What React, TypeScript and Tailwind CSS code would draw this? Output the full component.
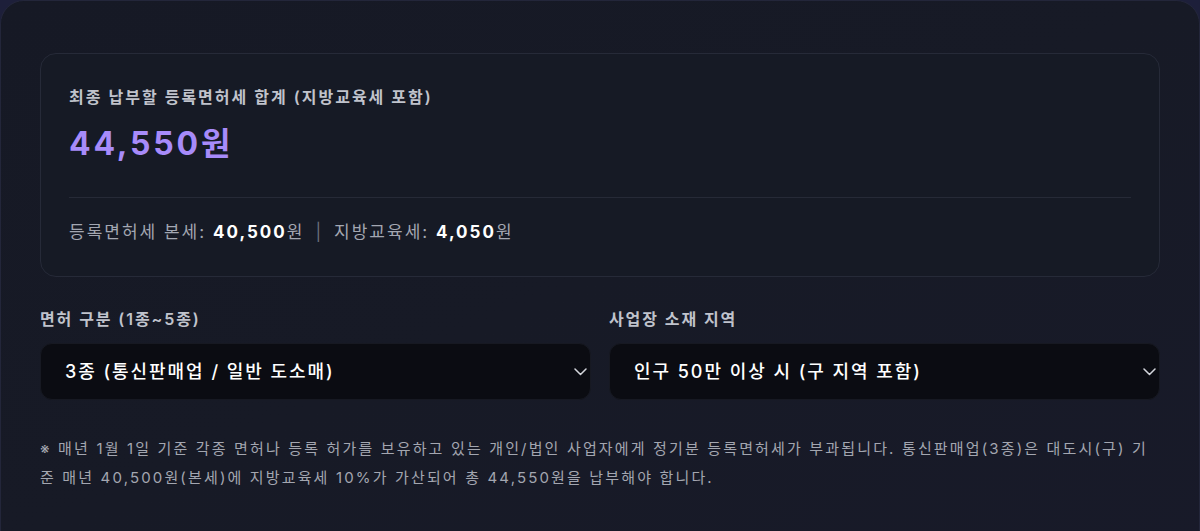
const font = { fontFamily: '"Inter", "Noto Sans CJK KR", sans-serif' };

type SelectProps = { label: string; value: string };

const Chevron = () => (
  <svg width="13" height="8" viewBox="0 0 13 8" fill="none" className="text-[#d4d6dc]">
    <path d="M1 1l5.5 5.5L12 1" stroke="currentColor" strokeWidth="1.5" strokeLinecap="round" strokeLinejoin="round" />
  </svg>
);

const SelectField = ({ label, value }: SelectProps) => {
  return (
    <div className="flex flex-col">
      <span className="text-[16px] leading-6 font-semibold tracking-[1.9px] text-[#c0c3cc] mb-[12px]">{label}</span>
      <div className="flex items-center justify-between h-[57px] rounded-xl bg-[#0b0c12] border border-[#171922] pl-6 pr-[3px]">
        <span className="text-[18px] font-medium tracking-[1.95px] text-white">{value}</span>
        <Chevron />
      </div>
    </div>
  );
};

const App = () => {
  return (
    <div className="w-[1200px] h-[531px] overflow-hidden bg-[#1d1f3a]" style={font}>
      <div className="h-[560px] rounded-[24px] border border-[#23263a] bg-gradient-to-br from-[#161925] via-[#171a26] to-[#181a29] px-[39px] pt-[52px]">
        {/* Total summary */}
        <div className="rounded-2xl border border-[#262a38] bg-[#161a25] px-[28px] pt-[31px] pb-[31px]">
          <p className="text-[16px] leading-6 font-semibold tracking-[2px] text-[#c0c3cc]">최종 납부할 등록면허세 합계 (지방교육세 포함)</p>
          <p className="mt-[15px] text-[32px] font-bold leading-[40px] tracking-[2.8px] text-[#a78bfa]">44,550원</p>
          <div className="mt-[33px] h-px bg-[#262a37]" />
          <p className="mt-[21px] text-[17px] leading-[26px] tracking-[2px] text-[#a3a7b2]">
            등록면허세 본세: <span className="font-bold text-white">40,500</span>원
            <span className="mx-[11px] text-[#6b6f7b]">|</span>
            지방교육세: <span className="font-bold text-white">4,050</span>원
          </p>
        </div>

        {/* Selectors */}
        <div className="grid grid-cols-2 gap-[18px] mt-[30px]">
          <SelectField label="면허 구분 (1종~5종)" value="3종 (통신판매업 / 일반 도소매)" />
          <SelectField label="사업장 소재 지역" value="인구 50만 이상 시 (구 지역 포함)" />
        </div>

        <p className="mt-[34px] text-[15px] leading-[29px] tracking-[2.15px] break-all text-[#a3a6b0]">
          ※ 매년 1월 1일 기준 각종 면허나 등록 허가를 보유하고 있는 개인/법인 사업자에게 정기분 등록면허세가 부과됩니다. 통신판매업(3종)은 대도시(구) 기준 매년 40,500원(본세)에 지방교육세 10%가 가산되어 총 44,550원을 납부해야 합니다.
        </p>
      </div>
    </div>
  );
};

export default App;
